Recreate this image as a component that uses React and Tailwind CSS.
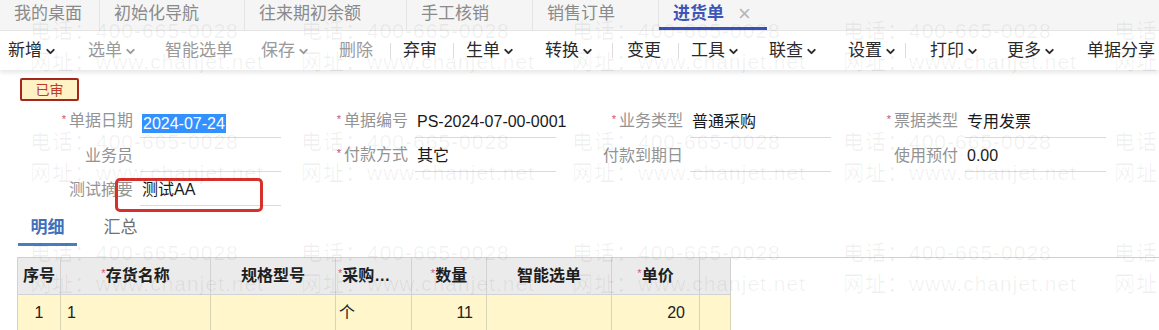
import React from 'react'
import { ChevronDown } from 'lucide-react'

const tabs = [
  { label: '我的桌面', w: 'w-[100px]' },
  { label: '初始化导航', w: 'w-[145px]' },
  { label: '往来期初余额', w: 'w-[162px]' },
  { label: '手工核销', w: 'w-[126px]' },
  { label: '销售订单', w: 'w-[126px]' },
]

const tools = [
  { label: '新增', chev: true, cls: 'ml-[8px]' },
  { label: '选单', chev: true, off: true, cls: 'ml-[31px]' },
  { label: '智能选单', off: true, cls: 'ml-[28px]' },
  { label: '保存', chev: true, off: true, cls: 'ml-[28px]' },
  { label: '删除', off: true, cls: 'ml-[29px]' },
  { sep: true, cls: 'ml-[17px]' },
  { label: '弃审', cls: 'ml-[12px]' },
  { sep: true, cls: 'ml-[16px]' },
  { label: '生单', chev: true, cls: 'ml-[12px]' },
  { label: '转换', chev: true, cls: 'ml-[30px]' },
  { sep: true, cls: 'ml-[18px]' },
  { label: '变更', cls: 'ml-[14px]' },
  { sep: true, cls: 'ml-[17px]' },
  { label: '工具', chev: true, cls: 'ml-[12px]' },
  { label: '联查', chev: true, cls: 'ml-[29px]' },
  { label: '设置', chev: true, cls: 'ml-[30px]' },
  { sep: true, cls: 'ml-[8px]' },
  { label: '打印', chev: true, cls: 'ml-[24px]' },
  { label: '更多', chev: true, cls: 'ml-[28px]' },
  { label: '单据分享', cls: 'ml-[31px]' },
]

const rows = [
  [
    { label: '单据日期', req: true, value: '2024-07-24', selected: true },
    { label: '单据编号', req: true, value: 'PS-2024-07-00-0001' },
    { label: '业务类型', req: true, value: '普通采购' },
    { label: '票据类型', req: true, value: '专用发票' },
  ],
  [
    { label: '业务员' },
    { label: '付款方式', req: true, value: '其它' },
    { label: '付款到期日' },
    { label: '使用预付', value: '0.00' },
  ],
  [{ label: '测试摘要', value: '测试AA' }],
]

const Star = () => <span className="text-[#cf4f72] text-[11px] relative -top-[3px] mr-[3px]">*</span>

const Field = ({ f }) => (
  <div className="flex items-end h-[34px]">
    <div className="w-[127px] text-right text-[16px] leading-[22px] pb-[5px] text-[#939393] whitespace-nowrap">
      {f.req && <Star />}
      {f.label}
    </div>
    <div className="ml-[7px] w-[141px] h-full flex items-end border-b border-[#dadada] pb-[4px] pl-[2px] text-[16px] leading-[22px] text-[#1a1a1a] whitespace-nowrap">
      {f.selected ? (
        <span className="bg-[#3391ff] text-white leading-[19px] px-[1px]">{f.value}</span>
      ) : (
        f.value
      )}
    </div>
  </div>
)

const cols = [
  { w: 'w-[43px]', title: '序号', align: 'text-left pl-[5px]' },
  { w: 'w-[150px]', title: '存货名称', req: true, align: 'text-center' },
  { w: 'w-[125px]', title: '规格型号', align: 'text-center' },
  { w: 'w-[76px]', title: '采购…', req: true, align: 'text-left pl-[2px]' },
  { w: 'w-[75px]', title: '数量', req: true, align: 'text-center' },
  { w: 'w-[125px]', title: '智能选单', align: 'text-center' },
  { w: 'w-[88px]', title: '单价', req: true, align: 'text-center' },
  { w: 'w-[31px]', title: '', align: '' },
]

const cells = [
  { v: '1', cls: 'text-center' },
  { v: '1', cls: 'text-left pl-[6px]' },
  { v: '', cls: '' },
  { v: '个', cls: 'text-left pl-[3px]' },
  { v: '11', cls: 'text-right pr-[13px]' },
  { v: '', cls: '' },
  { v: '20', cls: 'text-right pr-[14px]' },
  { v: '', cls: '' },
]

const Watermark = () => (
  <div className="absolute inset-0 pointer-events-none overflow-hidden">
    {[0, 1, 2].map((r) => (
      <div key={r} className="flex h-[111px] pl-[30px] pt-[15px]">
        {[0, 1, 2, 3, 4].map((c) => (
          <div key={c} className="w-[271px] shrink-0 text-[21px] leading-[31px] tracking-[1px] text-[rgba(0,0,0,0.06)] whitespace-nowrap">
            <div>电话：400-665-0028</div>
            <div>网址：www.chanjet.net</div>
          </div>
        ))}
      </div>
    ))}
  </div>
)

export default function App() {
  return (
    <div className="relative w-[1159px] h-[330px] overflow-hidden bg-white font-['Liberation_Sans','Noto_Sans_CJK_SC',sans-serif]">
      {/* tab bar */}
      <div className="flex h-[31px] bg-[#f5f5f5] border-b border-[#e6e6e6]">
        {tabs.map((t, i) => (
          <div key={i} className={`${t.w} h-full flex items-center pl-[14px] text-[17px] leading-[24px] text-[#8a8a8a] border-r border-[#e4e4e4] pb-[3px]`}>
            {t.label}
          </div>
        ))}
        <div className="w-[108px] h-full flex items-center pl-[14px] border-b-[3px] border-[#3b50b6]">
          <span className="text-[17px] leading-[24px] font-bold text-[#3e55b8]">进货单</span>
          <span className="ml-[14px] text-[22px] leading-[20px] text-[#b5b5b5]">×</span>
        </div>
      </div>

      {/* toolbar */}
      <div className="relative flex items-center h-[39px] bg-white shadow-[0_3px_4px_rgba(0,0,0,0.09)]">
        {tools.map((t, i) =>
          t.sep ? (
            <div key={i} className={`${t.cls} w-px h-[15px] bg-[#dcdcdc]`} />
          ) : (
            <div key={i} className={`${t.cls} flex items-center text-[17px] leading-[24px] whitespace-nowrap ${t.off ? 'text-[#9a9a9a]' : 'text-[#2a2a2a]'}`}>
              {t.label}
              {t.chev && <ChevronDown size={13} strokeWidth={3.5} className="ml-[2px] mt-[2px]" />}
            </div>
          )
        )}
      </div>

      {/* status badge */}
      <div className="ml-[20px] mt-[8px] w-[59px] h-[23px] flex items-center justify-center border-2 border-[#a3271e] bg-[#fff3c6] rounded-[2px] text-[14px] leading-[18px] text-[#bf3a2c]">
        已审
      </div>

      {/* header form */}
      <div className="relative mt-[3px] pl-[6px]">
        {rows.map((row, ri) => (
          <div key={ri} className="flex">
            {row.map((f, fi) => (
              <Field key={fi} f={f} />
            ))}
          </div>
        ))}
        <div className="absolute left-[115px] top-[74px] w-[148px] h-[34px] border-[3px] border-[#d6302a] rounded-[5px]" />
      </div>

      {/* detail tabs */}
      <div className="flex ml-[18px] mt-[6px]">
        <div className="w-[59px] h-[34px] flex items-center justify-center border-b-[3px] border-[#4a7cc2] text-[17px] font-bold text-[#3f70b9]">明细</div>
        <div className="ml-[14px] w-[59px] h-[34px] flex items-center justify-center text-[17px] text-[#707070] pb-[3px]">汇总</div>
      </div>

      {/* grid */}
      <div className="mt-[11px] ml-[17px] border-t border-[#d0d0d0]">
        <table className="table-fixed border-collapse text-[16px]">
          <colgroup>
            {cols.map((c, i) => (
              <col key={i} className={c.w} />
            ))}
          </colgroup>
          <thead>
            <tr className="h-[36px] bg-[#ebebeb]">
              {cols.map((c, i) => (
                <th key={i} className={`${c.align} border-x border-b border-[#d2d2d2] font-bold text-[#1e1e1e] whitespace-nowrap overflow-hidden`}>
                  {c.req && <span className="text-[#d0587a] text-[11px] font-normal relative -top-[4px]">*</span>}
                  {c.title}
                </th>
              ))}
            </tr>
          </thead>
          <tbody>
            <tr className="h-[38px] bg-[#fff6cc]">
              {cells.map((c, i) => (
                <td key={i} className={`${c.cls} border-x border-[#d8d3b4] text-[#222]`}>{c.v}</td>
              ))}
            </tr>
          </tbody>
        </table>
      </div>

      <Watermark />
    </div>
  )
}
